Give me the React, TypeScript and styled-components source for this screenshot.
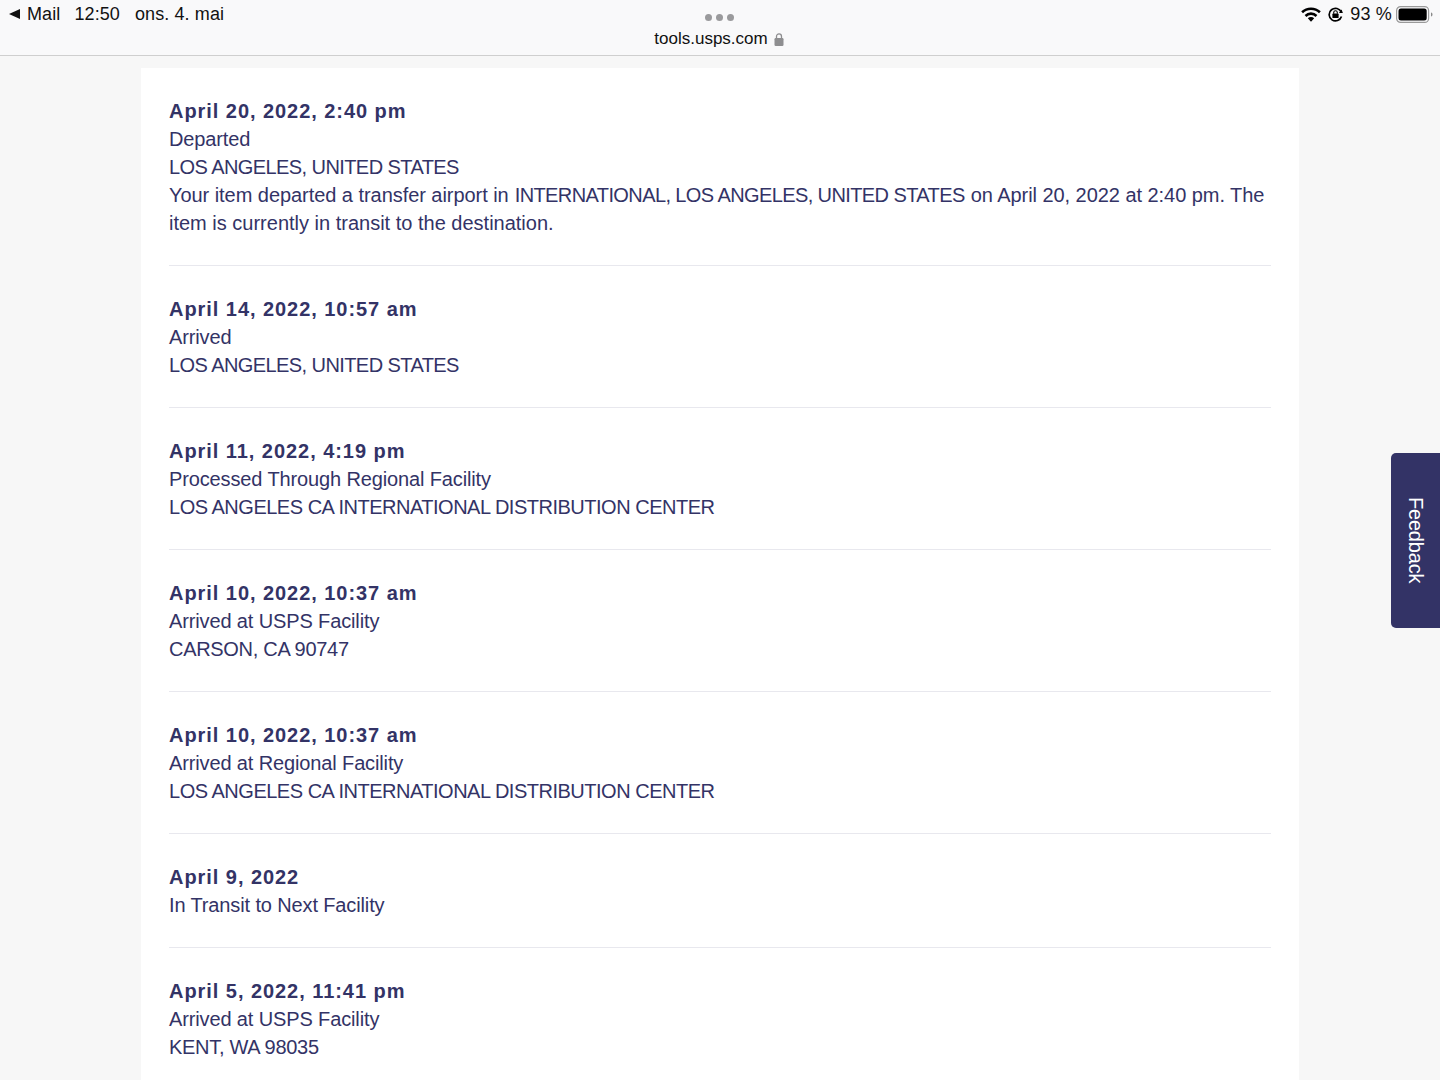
import styled, { createGlobalStyle } from "styled-components";

type TrackingEvent = {
  date: string;
  status: string;
  location?: string;
  hasDetail?: boolean;
  // uppercase place names run tighter than the digits-heavy ones
  locationSpacing?: number;
};

const events: TrackingEvent[] = [
  {
    date: "April 20, 2022, 2:40 pm",
    status: "Departed",
    location: "LOS ANGELES, UNITED STATES",
    locationSpacing: -0.58,
    hasDetail: true,
  },
  {
    date: "April 14, 2022, 10:57 am",
    status: "Arrived",
    location: "LOS ANGELES, UNITED STATES",
    locationSpacing: -0.58,
  },
  {
    date: "April 11, 2022, 4:19 pm",
    status: "Processed Through Regional Facility",
    location: "LOS ANGELES CA INTERNATIONAL DISTRIBUTION CENTER",
    locationSpacing: -0.49,
  },
  {
    date: "April 10, 2022, 10:37 am",
    status: "Arrived at USPS Facility",
    location: "CARSON, CA 90747",
    locationSpacing: -0.3,
  },
  {
    date: "April 10, 2022, 10:37 am",
    status: "Arrived at Regional Facility",
    location: "LOS ANGELES CA INTERNATIONAL DISTRIBUTION CENTER",
    locationSpacing: -0.49,
  },
  { date: "April 9, 2022", status: "In Transit to Next Facility" },
  {
    date: "April 5, 2022, 11:41 pm",
    status: "Arrived at USPS Facility",
    location: "KENT, WA 98035",
    locationSpacing: -0.29,
  },
];

const GlobalStyle = createGlobalStyle`
  html, body {
    margin: 0;
    height: 1080px;
    overflow: hidden;
    background: #f7f7f7;
    font-family: "Liberation Sans", Arial, sans-serif;
  }
`;

const StatusBar = styled.header`
  display: grid;
  grid-template-columns: 1fr auto 1fr;
  height: 56px;
  box-sizing: border-box;
  background: #f9f9fa;
  border-bottom: 1px solid #cfcfcf;
  color: #111;
  font-size: 18px;
`;

const StatusLeft = styled.div`
  display: flex;
  align-items: center;
  height: 28px;
  padding-left: 9px;
  letter-spacing: 0.1px;
`;

const BackArrow = styled.span`
  width: 0;
  height: 0;
  border-top: 5.5px solid transparent;
  border-bottom: 5.5px solid transparent;
  border-right: 11px solid #111;
  margin-right: 7px;
`;

const StatusItem = styled.span<{ $gap?: number }>`
  margin-left: ${(p) => p.$gap ?? 0}px;
`;

const AddressBlock = styled.div`
  display: flex;
  flex-direction: column;
  align-items: center;
  padding-top: 14px;
  transform: translateX(-1px);
`;

const Dots = styled.div`
  display: flex;
  gap: 4px;
  height: 7px;
  margin-left: 2px;
`;

const Dot = styled.i`
  width: 7px;
  height: 7px;
  border-radius: 50%;
  background: #9a9a9c;
`;

const Address = styled.div`
  display: flex;
  align-items: center;
  gap: 6px;
  margin-top: 8px;
  height: 20px;
  font-size: 17px;
`;

const StatusRight = styled.div`
  display: flex;
  align-items: center;
  justify-content: flex-end;
  height: 28px;
  padding-right: 7px;
`;

const RotationSlot = styled.span`
  display: flex;
  margin-left: 7px;
`;

const Percent = styled.span`
  margin: 0 4px 0 7px;
  letter-spacing: 0.2px;
`;

const Page = styled.main`
  padding: 12px 141px 0;
  height: 1024px;
  overflow: hidden;
  box-sizing: border-box;
`;

const Card = styled.section`
  background: #fff;
  padding: 29px 28px 0;
  color: #333366;
  font-size: 20px;
  line-height: 28px;
`;

const Entry = styled.article`
  padding-bottom: 28px;
  margin-bottom: 29px;
  border-bottom: 1px solid #e8e8ee;
`;

const EventDate = styled.div`
  font-weight: 700;
  letter-spacing: 0.95px;
`;

const Status = styled.div`
  letter-spacing: -0.13px;
`;

const Location = styled.div<{ $spacing?: number }>`
  letter-spacing: ${(p) => p.$spacing ?? 0}px;
`;

const DetailLine = styled.div<{ $spacing?: number }>`
  letter-spacing: ${(p) => p.$spacing ?? 0}px;
  white-space: nowrap;
`;

const Caps = styled.span`
  letter-spacing: -0.6px;
  margin: 0 0.5px;
`;

const FeedbackTab = styled.button`
  position: fixed;
  right: 0;
  top: 453px;
  width: 49px;
  height: 175px;
  padding: 0;
  border: 0;
  border-radius: 5px 0 0 5px;
  background: #333366;
  color: #fff;
  font: 20px "Liberation Sans", Arial, sans-serif;
  letter-spacing: -0.2px;
  writing-mode: vertical-rl;
  text-align: center;
`;

const WifiIcon = () => (
  <svg width="20" height="15" viewBox="0 0 20 15">
    <path d="M10 14.8 6.8 11.2a4.6 4.6 0 0 1 6.4 0Z" fill="#000" />
    <path d="M3.6 7.9a9.2 9.2 0 0 1 12.8 0l-1.8 2a6.6 6.6 0 0 0-9.2 0Z" fill="#000" />
    <path d="M.2 4.3a14.2 14.2 0 0 1 19.6 0l-1.8 2a11.6 11.6 0 0 0-16 0Z" fill="#000" />
  </svg>
);

const RotationLockIcon = () => (
  <svg width="15" height="15" viewBox="0 0 15 15">
    <path d="M13.5 9.5A6.3 6.3 0 1 1 13.3 5.2" fill="none" stroke="#000" strokeWidth="1.7" />
    <path d="M10.9 5.9h4L13.6 2.6Z" fill="#000" />
    <rect x="4.4" y="6.6" width="6.2" height="4.4" rx="0.6" fill="#000" />
    <path d="M5.7 6.8V5.6a1.8 1.8 0 0 1 3.6 0v1.2" fill="none" stroke="#000" strokeWidth="1.1" />
  </svg>
);

const BatteryIcon = () => (
  <svg width="37" height="17" viewBox="0 0 37 17">
    <rect x="0.6" y="0.6" width="32" height="15.8" rx="4" fill="none" stroke="#9a9a9a" strokeWidth="1.2" />
    <rect x="2.5" y="2.5" width="28.2" height="12" rx="2.5" fill="#000" />
    <path d="M35 6.5c1 .3 1.5 1 1.5 2s-.5 1.7-1.5 2Z" fill="#8a8a8a" />
  </svg>
);

const LockIcon = () => (
  <svg width="10" height="13" viewBox="0 0 10 13">
    <rect x="0.5" y="5" width="9" height="8" rx="1.2" fill="#8e8e90" />
    <path d="M2.5 5.5V3.4a2.5 2.5 0 0 1 5 0v2.1" fill="none" stroke="#8e8e90" strokeWidth="1.3" />
  </svg>
);

export default function App() {
  return (
    <>
      <GlobalStyle />
      <StatusBar>
        <StatusLeft>
          <BackArrow />
          <StatusItem>Mail</StatusItem>
          <StatusItem $gap={14}>12:50</StatusItem>
          <StatusItem $gap={15}>ons. 4. mai</StatusItem>
        </StatusLeft>
        <AddressBlock>
          <Dots>
            <Dot />
            <Dot />
            <Dot />
          </Dots>
          <Address>
            tools.usps.com
            <LockIcon />
          </Address>
        </AddressBlock>
        <StatusRight>
          <WifiIcon />
          <RotationSlot>
            <RotationLockIcon />
          </RotationSlot>
          <Percent>93 %</Percent>
          <BatteryIcon />
        </StatusRight>
      </StatusBar>
      <Page>
        <Card>
          {events.map((ev, i) => (
            <Entry key={i}>
              <EventDate>{ev.date}</EventDate>
              <Status>{ev.status}</Status>
              {ev.location && <Location $spacing={ev.locationSpacing}>{ev.location}</Location>}
              {ev.hasDetail && (
                <>
                  <DetailLine $spacing={-0.05}>
                    Your item departed a transfer airport in <Caps>INTERNATIONAL, LOS ANGELES, UNITED STATES</Caps> on
                    April 20, 2022 at 2:40 pm. The
                  </DetailLine>
                  <DetailLine>item is currently in transit to the destination.</DetailLine>
                </>
              )}
            </Entry>
          ))}
        </Card>
      </Page>
      <FeedbackTab>Feedback</FeedbackTab>
    </>
  );
}
